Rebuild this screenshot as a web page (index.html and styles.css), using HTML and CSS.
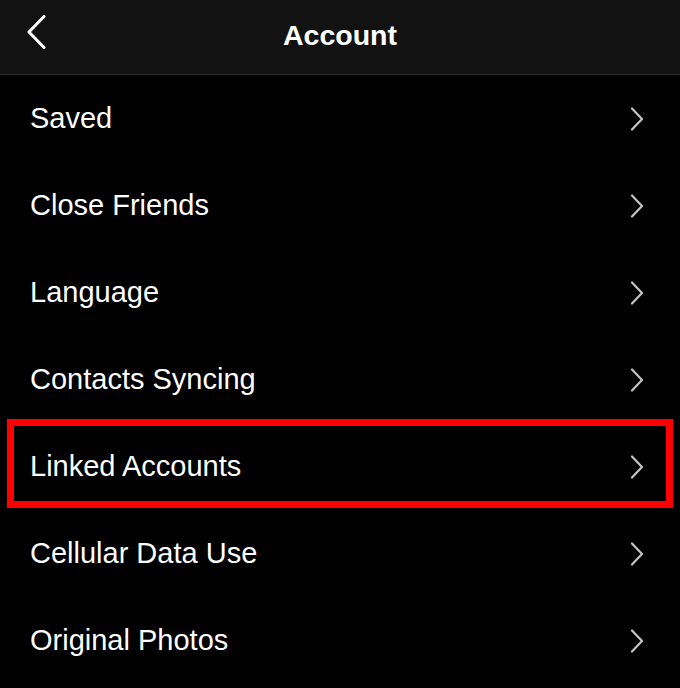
FILE: index.html
```html
<!DOCTYPE html>
<html lang="en">
<head>
    <meta charset="UTF-8">
    <title>Account</title>
    <link rel="stylesheet" href="styles.css">
</head>
<body>
    <div class="header">
        <button class="btn-back">
            <svg width="20" height="34" viewBox="0 0 20 34"><path d="M18 1.5 L3 17 L18 32.5" fill="none" stroke="#fff" stroke-width="3" stroke-linecap="round" stroke-linejoin="round"/></svg>
        </button>
        <h3 class="title">Account</h3>
    </div>
    <ul class="menu">
        <li class="item">Saved <svg class="chev" viewBox="0 0 14 24"><path d="M2 1.5 L12 12 L2 22.5"/></svg></li>
        <li class="item">Close Friends <svg class="chev" viewBox="0 0 14 24"><path d="M2 1.5 L12 12 L2 22.5"/></svg></li>
        <li class="item">Language <svg class="chev" viewBox="0 0 14 24"><path d="M2 1.5 L12 12 L2 22.5"/></svg></li>
        <li class="item">Contacts Syncing <svg class="chev" viewBox="0 0 14 24"><path d="M2 1.5 L12 12 L2 22.5"/></svg></li>
        <li class="item marked">Linked Accounts <svg class="chev" viewBox="0 0 14 24"><path d="M2 1.5 L12 12 L2 22.5"/></svg></li>
        <li class="item">Cellular Data Use <svg class="chev" viewBox="0 0 14 24"><path d="M2 1.5 L12 12 L2 22.5"/></svg></li>
        <li class="item">Original Photos <svg class="chev" viewBox="0 0 14 24"><path d="M2 1.5 L12 12 L2 22.5"/></svg></li>
    </ul>
</body>
</html>
```

FILE: styles.css
```css
body {
    margin: 0;
    background: #000;
    color: #fff;
    font-family: "Liberation Sans", Arial, sans-serif;
    overflow: hidden;
}
.header {
    height: 74px;
    background: #121212;
    border-bottom: 1px solid #2c2c2c;
    display: flex;
    align-items: center;
    justify-content: center;
    position: relative;
}
.btn-back {
    position: absolute;
    left: 26px;
    top: 15px;
    padding: 0;
    border: none;
    background: none;
    line-height: 0;
}
.title {
    margin: 0;
    font-size: 28.5px;
    font-weight: bold;
    padding-bottom: 3px;
}
.menu {
    list-style: none;
    margin: 0;
    padding: 0;
}
.item {
    height: 87px;
    display: flex;
    align-items: center;
    justify-content: space-between;
    padding: 0 36px 0 30px;
    font-size: 29px;
    position: relative;
}
.chev {
    width: 14px;
    height: 24px;
    fill: none;
    stroke: #c4c4c4;
    stroke-width: 2.2;
    stroke-linecap: round;
    stroke-linejoin: round;
}
.marked::after {
    content: "";
    position: absolute;
    left: 7px;
    top: -4px;
    width: 652px;
    height: 75px;
    border: 7px solid #ff0000;
}
```
